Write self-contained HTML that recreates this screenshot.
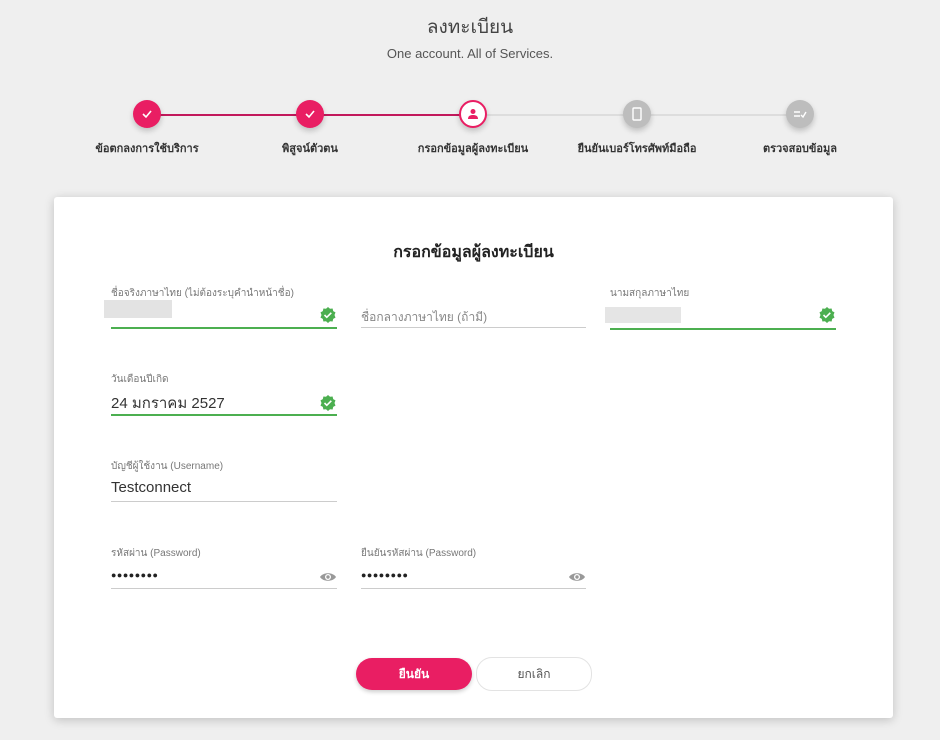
<!DOCTYPE html>
<html><head><meta charset="utf-8"><style>
body{margin:0;width:940px;height:740px;background:#efefef;font-family:"Liberation Sans","Noto Sans CJK SC",sans-serif;position:relative;overflow:hidden;color:#333}
.a{position:absolute}
.title{left:0;width:940px;text-align:center;top:12px;font-size:19px;color:#444}
.sub{left:0;width:940px;text-align:center;top:46px;font-size:13px;color:#555}
.line{height:2px;top:114px}
.c{width:28px;height:28px;border-radius:50%;top:100px;display:flex;align-items:center;justify-content:center;box-shadow:0 3px 6px rgba(0,0,0,.2)}
.lbl{top:139px;width:160px;text-align:center;font-size:11px;font-weight:bold;color:#333}
.card{left:54px;top:197px;width:839px;height:521px;background:#fff;border-radius:3px;box-shadow:0 2px 10px rgba(0,0,0,.2)}
.fl{font-size:10px;color:#777}
.ul{height:1px;background:#ccc}
.g{background:#4caf50}
.v{font-size:15px;color:#333}
.dots{font-size:9px;letter-spacing:0.5px;font-weight:bold;color:#222}
</style></head><body>
<div class="a title">ลงทะเบียน</div>
<div class="a sub">One account. All of Services.</div>
<div class="a line" style="left:147px;width:326px;background:#c2185b"></div>
<div class="a line" style="left:473px;width:327px;background:#ddd"></div>
<div class="a c" style="left:133px;background:#e91e63"><svg width="12" height="12" viewBox="0 0 12 12"><path d="M2 6l3 3 5-6" stroke="#fff" stroke-width="1.6" fill="none"/></svg></div>
<div class="a c" style="left:296px;background:#e91e63"><svg width="12" height="12" viewBox="0 0 12 12"><path d="M2 6l3 3 5-6" stroke="#fff" stroke-width="1.6" fill="none"/></svg></div>
<div class="a c" style="left:459px;background:#fff;border:2px solid #e91e63;width:24px;height:24px"><svg width="12" height="12" viewBox="0 0 12 12"><circle cx="6" cy="3.5" r="2.5" fill="#e91e63"/><path d="M1 11c0-3 2-4 5-4s5 1 5 4z" fill="#e91e63"/></svg></div>
<div class="a c" style="left:623px;background:#bdbdbd"><svg width="10" height="14" viewBox="0 0 10 14"><rect x="1" y="1" width="8" height="12" rx="1" stroke="#fff" stroke-width="1.4" fill="none"/></svg></div>
<div class="a c" style="left:786px;background:#bdbdbd"><svg width="14" height="10" viewBox="0 0 14 10"><path d="M1 3h6M1 7h6M8 6l2 2 3-5" stroke="#fff" stroke-width="1.4" fill="none"/></svg></div>
<div class="a lbl" style="left:67px">ข้อตกลงการใช้บริการ</div>
<div class="a lbl" style="left:230px">พิสูจน์ตัวตน</div>
<div class="a lbl" style="left:393px">กรอกข้อมูลผู้ลงทะเบียน</div>
<div class="a lbl" style="left:557px">ยืนยันเบอร์โทรศัพท์มือถือ</div>
<div class="a lbl" style="left:720px">ตรวจสอบข้อมูล</div>
<div class="a card"></div>
<div class="a" style="left:54px;width:839px;top:240px;text-align:center;font-size:16px;font-weight:bold;color:#222">กรอกข้อมูลผู้ลงทะเบียน</div>

<div class="a fl" style="left:111px;top:286px">ชื่อจริงภาษาไทย (ไม่ต้องระบุคำนำหน้าชื่อ)</div>
<div class="a" style="left:104px;top:300px;width:68px;height:18px;background:#e3e3e3"></div>
<div class="a ul g" style="left:111px;top:327px;width:226px;height:2px"></div>
<div class="a fl" style="left:361px;top:308px;font-size:12px;color:#888">ชื่อกลางภาษาไทย (ถ้ามี)</div>
<div class="a ul" style="left:361px;top:327px;width:225px"></div>
<div class="a fl" style="left:610px;top:286px">นามสกุลภาษาไทย</div>
<div class="a" style="left:605px;top:307px;width:76px;height:16px;background:#e5e5e5"></div>
<div class="a ul g" style="left:610px;top:328px;width:226px;height:2px"></div>

<div class="a fl" style="left:111px;top:372px">วันเดือนปีเกิด</div>
<div class="a v" style="left:111px;top:391px">24 มกราคม 2527</div>
<div class="a ul g" style="left:111px;top:414px;width:226px;height:2px"></div>

<div class="a fl" style="left:111px;top:459px">บัญชีผู้ใช้งาน (Username)</div>
<div class="a v" style="left:111px;top:479px">Testconnect</div>
<div class="a ul" style="left:111px;top:501px;width:226px"></div>

<div class="a fl" style="left:111px;top:546px">รหัสผ่าน (Password)</div>
<div class="a dots" style="left:111px;top:570px">●●●●●●●●</div>
<div class="a ul" style="left:111px;top:588px;width:226px"></div>
<div class="a fl" style="left:361px;top:546px">ยืนยันรหัสผ่าน (Password)</div>
<div class="a dots" style="left:361px;top:570px">●●●●●●●●</div>
<div class="a ul" style="left:361px;top:588px;width:225px"></div>

<svg class="a" style="left:320px;top:307px" width="16" height="16" viewBox="0 0 16 16"><path d="M8 0l2 1.8 2.6-.3.6 2.6 2.3 1.3-1 2.6 1 2.6-2.3 1.3-.6 2.6-2.6-.3L8 16l-2-1.8-2.6.3-.6-2.6L.5 10.6l1-2.6-1-2.6 2.3-1.3.6-2.6 2.6.3z" fill="#4caf50"/><path d="M4.5 8l2.3 2.3 4.5-4.5" stroke="#fff" stroke-width="1.6" fill="none"/></svg>
<svg class="a" style="left:819px;top:307px" width="16" height="16" viewBox="0 0 16 16"><path d="M8 0l2 1.8 2.6-.3.6 2.6 2.3 1.3-1 2.6 1 2.6-2.3 1.3-.6 2.6-2.6-.3L8 16l-2-1.8-2.6.3-.6-2.6L.5 10.6l1-2.6-1-2.6 2.3-1.3.6-2.6 2.6.3z" fill="#4caf50"/><path d="M4.5 8l2.3 2.3 4.5-4.5" stroke="#fff" stroke-width="1.6" fill="none"/></svg>
<svg class="a" style="left:320px;top:395px" width="16" height="16" viewBox="0 0 16 16"><path d="M8 0l2 1.8 2.6-.3.6 2.6 2.3 1.3-1 2.6 1 2.6-2.3 1.3-.6 2.6-2.6-.3L8 16l-2-1.8-2.6.3-.6-2.6L.5 10.6l1-2.6-1-2.6 2.3-1.3.6-2.6 2.6.3z" fill="#4caf50"/><path d="M4.5 8l2.3 2.3 4.5-4.5" stroke="#fff" stroke-width="1.6" fill="none"/></svg>
<svg class="a" style="left:319px;top:571px" width="18" height="12" viewBox="0 0 18 12"><path d="M1 6C4 1 14 1 17 6 14 11 4 11 1 6z" fill="#999"/><circle cx="9" cy="6" r="3" fill="#fff"/><circle cx="9" cy="6" r="1.7" fill="#999"/></svg>
<svg class="a" style="left:568px;top:571px" width="18" height="12" viewBox="0 0 18 12"><path d="M1 6C4 1 14 1 17 6 14 11 4 11 1 6z" fill="#999"/><circle cx="9" cy="6" r="3" fill="#fff"/><circle cx="9" cy="6" r="1.7" fill="#999"/></svg>

<div class="a" style="left:356px;top:658px;width:116px;height:32px;border-radius:16px;background:#e91e63;color:#fff;font-size:12px;font-weight:bold;text-align:center;line-height:32px;box-shadow:0 2px 4px rgba(0,0,0,.2)">ยืนยัน</div>
<div class="a" style="left:476px;top:657px;width:114px;height:32px;border-radius:16px;border:1px solid #e3e3e3;background:#fff;color:#555;font-size:12px;text-align:center;line-height:32px">ยกเลิก</div>
</body></html>
